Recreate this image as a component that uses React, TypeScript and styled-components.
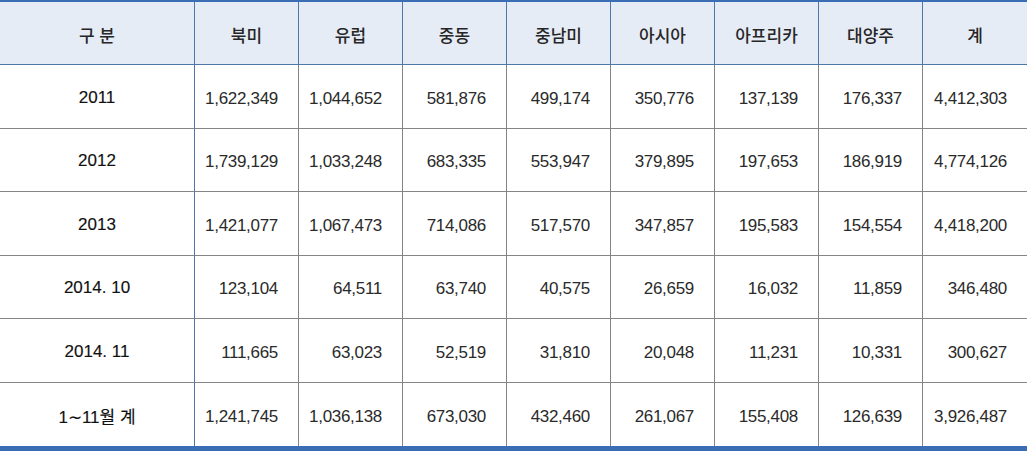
import React from "react";
import styled, { createGlobalStyle } from "styled-components";

const Global = createGlobalStyle`
  html, body { margin: 0; padding: 0; background: #ffffff; }
  body { font-family: "Liberation Sans", "Noto Sans CJK KR", sans-serif; }
`;

const Table = styled.div`
  width: 1027px;
  display: grid;
  grid-template-columns: 195px repeat(7, 104px) 104px;
  grid-template-rows: 63px repeat(6, 63.5px);
  border-top: 2px solid #3a6db3;
  border-bottom: 5px solid #3a6db3;
  box-sizing: border-box;
`;

const HeadCell = styled.div<{ $last?: boolean }>`
  display: flex;
  align-items: center;
  justify-content: center;
  background: #e6ecf6;
  border-right: ${(p) => (p.$last ? "none" : "1px solid #4f76a8")};
  border-bottom: 1px solid #4f76a8;
  box-sizing: border-box;
  font-size: 17px;
  font-weight: 500;
  color: #262626;
  padding-top: 2px;
`;

const LabelCell = styled.div<{ $lastRow?: boolean }>`
  display: flex;
  align-items: center;
  justify-content: center;
  border-right: 1px solid #4f76a8;
  border-bottom: ${(p) => (p.$lastRow ? "none" : "1px solid #858585")};
  box-sizing: border-box;
  font-size: 17px;
  font-weight: 400;
  color: #111111;
  -webkit-text-stroke: 0.15px #111111;
  padding-top: 3px;
`;

const NumCell = styled.div<{ $last?: boolean; $lastRow?: boolean }>`
  display: flex;
  align-items: center;
  justify-content: flex-end;
  padding-right: 20px;
  border-right: ${(p) => (p.$last ? "none" : "1px solid #858585")};
  border-bottom: ${(p) => (p.$lastRow ? "none" : "1px solid #858585")};
  box-sizing: border-box;
  font-size: 17px;
  letter-spacing: -0.3px;
  color: #2a2a2a;
  padding-top: 5px;
`;

const headers = ["구 분", "북미", "유럽", "중동", "중남미", "아시아", "아프리카", "대양주", "계"];

const rows: [string, string[]][] = [
  ["2011", ["1,622,349", "1,044,652", "581,876", "499,174", "350,776", "137,139", "176,337", "4,412,303"]],
  ["2012", ["1,739,129", "1,033,248", "683,335", "553,947", "379,895", "197,653", "186,919", "4,774,126"]],
  ["2013", ["1,421,077", "1,067,473", "714,086", "517,570", "347,857", "195,583", "154,554", "4,418,200"]],
  ["2014. 10", ["123,104", "64,511", "63,740", "40,575", "26,659", "16,032", "11,859", "346,480"]],
  ["2014. 11", ["111,665", "63,023", "52,519", "31,810", "20,048", "11,231", "10,331", "300,627"]],
  ["1∼11월 계", ["1,241,745", "1,036,138", "673,030", "432,460", "261,067", "155,408", "126,639", "3,926,487"]],
];

export default function App() {
  return (
    <>
      <Global />
      <Table>
        {headers.map((h, i) => (
          <HeadCell key={h} $last={i === headers.length - 1}>
            {h}
          </HeadCell>
        ))}
        {rows.map(([label, values], r) => (
          <React.Fragment key={label}>
            <LabelCell $lastRow={r === rows.length - 1}>{label}</LabelCell>
            {values.map((v, i) => (
              <NumCell key={i} $last={i === values.length - 1} $lastRow={r === rows.length - 1}>
                {v}
              </NumCell>
            ))}
          </React.Fragment>
        ))}
      </Table>
    </>
  );
}
